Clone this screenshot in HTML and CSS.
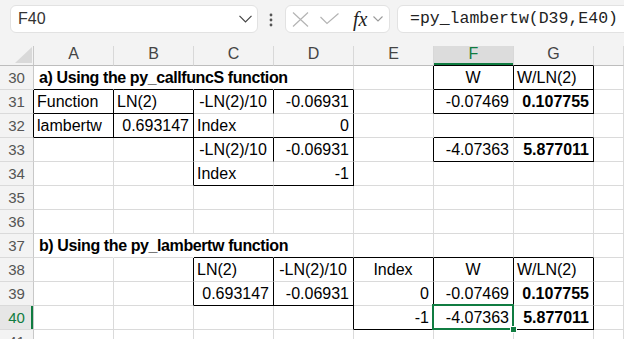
FILE: index.html
```html
<!DOCTYPE html>
<html>
<head>
  <title>Book1 - Excel</title>
  <link rel="stylesheet" href="styles.css">
</head>
<body>
  <div class="toolbar">
    <div class="name-box">
      <span>F40</span>
      <svg width="13" height="8" viewBox="0 0 13 8"><polyline points="0.5,0.8 6.5,6.8 12.5,0.8" fill="none" stroke="#444" stroke-width="1.2"/></svg>
    </div>
    <svg class="dots" width="4" height="16" viewBox="0 0 4 16"><circle cx="2" cy="2" r="1.4" fill="#555"/><circle cx="2" cy="7" r="1.4" fill="#555"/><circle cx="2" cy="12" r="1.4" fill="#555"/></svg>
    <div class="fx-box">
      <svg width="17" height="15" viewBox="0 0 17 15"><path d="M1 0.5 L16 14.5 M16 0.5 L1 14.5" stroke="#b4b4b4" stroke-width="1.2" fill="none"/></svg>
      <svg width="19" height="12" viewBox="0 0 19 12"><polyline points="0.5,4 7,10.5 18.5,0.5" fill="none" stroke="#b4b4b4" stroke-width="1.2"/></svg>
      <span class="fx">fx</span>
      <svg width="10" height="6" viewBox="0 0 10 6"><polyline points="0.5,0.5 5,5 9.5,0.5" fill="none" stroke="#9a9a9a" stroke-width="1.1"/></svg>
    </div>
    <div class="formula">=py_lambertw(D39,E40)</div>
  </div>

  <div class="sheet">
    <div class="corner"></div>
    <div class="colhead">A</div>
    <div class="colhead">B</div>
    <div class="colhead">C</div>
    <div class="colhead">D</div>
    <div class="colhead">E</div>
    <div class="colhead active">F</div>
    <div class="colhead dark">G</div>
    <div class="colhead"></div>

    <!-- 30 -->
    <div class="rowhead">30</div>
    <div class="c nogrid heading bb">a) Using the py_callfuncS function</div>
    <div class="c nogrid bb"></div>
    <div class="c nogrid bb"></div>
    <div class="c bb"></div>
    <div class="c br"></div>
    <div class="c ctr br bb">W</div>
    <div class="c br bb">W/LN(2)</div>
    <div class="c"></div>

    <!-- 31 -->
    <div class="rowhead br">31</div>
    <div class="c br bb">Function</div>
    <div class="c br bb">LN(2)</div>
    <div class="c ctr br">-LN(2)/10</div>
    <div class="c num br">-0.06931</div>
    <div class="c br"></div>
    <div class="c num bb">-0.07469</div>
    <div class="c num bold br bb">0.107755</div>
    <div class="c"></div>

    <!-- 32 -->
    <div class="rowhead br">32</div>
    <div class="c br bb">lambertw</div>
    <div class="c num br bb">0.693147</div>
    <div class="c bb">Index</div>
    <div class="c num br bb">0</div>
    <div class="c"></div>
    <div class="c bb"></div>
    <div class="c bb"></div>
    <div class="c"></div>

    <!-- 33 -->
    <div class="rowhead">33</div>
    <div class="c"></div>
    <div class="c br"></div>
    <div class="c ctr br">-LN(2)/10</div>
    <div class="c num br">-0.06931</div>
    <div class="c br"></div>
    <div class="c num bb">-4.07363</div>
    <div class="c num bold br bb">5.877011</div>
    <div class="c"></div>

    <!-- 34 -->
    <div class="rowhead">34</div>
    <div class="c"></div>
    <div class="c br"></div>
    <div class="c bb">Index</div>
    <div class="c num br bb">-1</div>
    <div class="c"></div>
    <div class="c"></div>
    <div class="c"></div>
    <div class="c"></div>

    <!-- 35 -->
    <div class="rowhead">35</div>
    <div class="c"></div>
    <div class="c"></div>
    <div class="c"></div>
    <div class="c"></div>
    <div class="c"></div>
    <div class="c"></div>
    <div class="c"></div>
    <div class="c"></div>

    <!-- 36 -->
    <div class="rowhead">36</div>
    <div class="c"></div>
    <div class="c"></div>
    <div class="c"></div>
    <div class="c"></div>
    <div class="c"></div>
    <div class="c"></div>
    <div class="c"></div>
    <div class="c"></div>

    <!-- 37 -->
    <div class="rowhead">37</div>
    <div class="c nogrid heading">b) Using the py_lambertw function</div>
    <div class="c nogrid"></div>
    <div class="c nogrid bb"></div>
    <div class="c bb"></div>
    <div class="c bb"></div>
    <div class="c bb"></div>
    <div class="c bb"></div>
    <div class="c"></div>

    <!-- 38 -->
    <div class="rowhead">38</div>
    <div class="c"></div>
    <div class="c br"></div>
    <div class="c br">LN(2)</div>
    <div class="c ctr br">-LN(2)/10</div>
    <div class="c ctr br">Index</div>
    <div class="c ctr br">W</div>
    <div class="c br">W/LN(2)</div>
    <div class="c"></div>

    <!-- 39 -->
    <div class="rowhead">39</div>
    <div class="c"></div>
    <div class="c br"></div>
    <div class="c num br bb">0.693147</div>
    <div class="c num br bb">-0.06931</div>
    <div class="c num br">0</div>
    <div class="c num br">-0.07469</div>
    <div class="c num bold br">0.107755</div>
    <div class="c"></div>

    <!-- 40 -->
    <div class="rowhead active">40</div>
    <div class="c"></div>
    <div class="c"></div>
    <div class="c"></div>
    <div class="c br"></div>
    <div class="c num br bb">-1</div>
    <div class="c num br bb selected">-4.07363</div>
    <div class="c num bold br bb">5.877011</div>
    <div class="c"></div>

    <!-- 41 -->
    <div class="rowhead">41</div>
    <div class="c"></div>
    <div class="c"></div>
    <div class="c"></div>
    <div class="c"></div>
    <div class="c"></div>
    <div class="c"></div>
    <div class="c"></div>
    <div class="c"></div>
  </div>
</body>
</html>
```

FILE: styles.css
```css
body {
  margin: 0;
  width: 624px;
  height: 339px;
  overflow: hidden;
  background: #fff;
  font-family: "Liberation Sans", Arial, sans-serif;
  color: #000;
}

.toolbar {
  display: flex;
  align-items: flex-start;
  height: 46px;
  box-sizing: border-box;
  padding: 5px 0 0 10px;
  background: #f3f3f3;
}

.name-box {
  display: flex;
  align-items: center;
  justify-content: space-between;
  width: 248px;
  height: 28px;
  box-sizing: border-box;
  padding: 0 5px 0 7px;
  background: #fff;
  border: 1px solid #e2e2e2;
  border-radius: 6px;
  font-size: 16px;
  color: #333;
}

.dots {
  margin: 8px 0 0 11px;
}

.fx-box {
  display: flex;
  align-items: center;
  gap: 11px;
  width: 105px;
  height: 28px;
  box-sizing: border-box;
  margin-left: 12px;
  padding-left: 6px;
  background: #fff;
  border: 1px solid #e2e2e2;
  border-radius: 6px;
}

.fx {
  font-family: "Liberation Serif", "Times New Roman", serif;
  font-style: italic;
  font-size: 20px;
  color: #222;
  margin-right: -5px;
  margin-left: 3px;
}

.formula {
  flex: 1;
  height: 28px;
  box-sizing: border-box;
  margin: 0 -20px 0 7px;
  padding-left: 12px;
  background: #fff;
  border: 1px solid #e2e2e2;
  border-radius: 6px;
  font-family: "Liberation Mono", "Courier New", monospace;
  font-size: 16.5px;
  line-height: 26px;
  color: #222;
}

.sheet {
  display: grid;
  grid-template-columns: 34px repeat(7, 80px) 1fr;
  grid-template-rows: 20px;
  grid-auto-rows: 24px;
}

.corner {
  background: #f3f3f3;
  border-right: 1px solid #c8c8c8;
  border-bottom: 1px solid #bdbdbd;
  position: relative;
}

.corner::after {
  content: "";
  position: absolute;
  right: 1px;
  bottom: 2px;
  border-left: 17px solid transparent;
  border-bottom: 16px solid #d9d9d9;
}

.colhead {
  background: #f3f3f3;
  border-right: 1px solid #d8d8d8;
  border-bottom: 1px solid #bdbdbd;
  text-align: center;
  font-size: 16px;
  line-height: 16px;
  color: #444;
}

.colhead.active {
  background: #dcdcdc;
  color: #107c41;
  border-bottom-color: #000;
  box-shadow: inset 0 -2px 0 #107c41;
}

.colhead.dark {
  border-bottom-color: #000;
}

.rowhead {
  background: #f3f3f3;
  border-right: 1px solid #c8c8c8;
  border-bottom: 1px solid #dadada;
  text-align: center;
  font-size: 15px;
  line-height: 22px;
  padding-top: 1px;
  color: #555;
}

.rowhead.active {
  background: #e6e6e6;
  color: #107c41;
  box-shadow: inset -2px 0 0 #107c41;
}

.c {
  box-sizing: border-box;
  border-right: 1px solid #dadada;
  border-bottom: 1px solid #dadada;
  padding: 1px 4px 0 3px;
  font-size: 16px;
  line-height: 22px;
  white-space: nowrap;
}

.c.nogrid {
  border-right-color: transparent;
}

.heading {
  font-weight: bold;
  letter-spacing: -0.4px;
  padding-left: 5px;
}

.num {
  text-align: right;
}

.ctr {
  text-align: center;
}

.bold {
  font-weight: bold;
}

.br,
.rowhead.br {
  border-right-color: #000;
}

.bb {
  border-bottom-color: #000;
}

.selected {
  position: relative;
}

.selected::before {
  content: "";
  position: absolute;
  left: -2px;
  top: -2px;
  right: -1px;
  bottom: -1px;
  border: 2px solid #107c41;
}

.selected::after {
  content: "";
  position: absolute;
  right: -4px;
  bottom: -4px;
  width: 5px;
  height: 5px;
  background: #107c41;
  border: 1px solid #fff;
}
```
